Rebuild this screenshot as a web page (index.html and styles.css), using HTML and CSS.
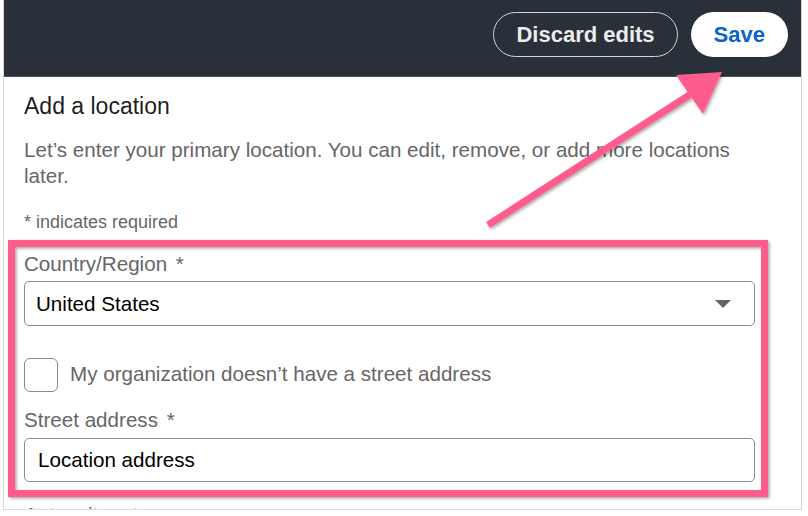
FILE: index.html
```html
<!DOCTYPE html>
<html lang="en">
<head>
<meta charset="utf-8">
<title>Add a location</title>
<link rel="stylesheet" href="styles.css">
</head>
<body>
<div class="window">
  <header class="topbar">
    <button class="btn btn-outline">Discard edits</button>
    <button class="btn btn-primary">Save</button>
  </header>
  <main class="content">
    <h2 class="title">Add a location</h2>
    <p class="desc">Let’s enter your primary location. You can edit, remove, or add more locations later.</p>
    <p class="req">* indicates required</p>
    <div class="field">
      <label class="label">Country/Region <span class="star">*</span></label>
      <div class="select">United States<span class="caret"></span></div>
    </div>
    <label class="check-row">
      <span class="checkbox"></span>
      <span class="check-text">My organization doesn’t have a street address</span>
    </label>
    <div class="field field-tight">
      <label class="label">Street address <span class="star">*</span></label>
      <div class="input">Location address</div>
    </div>
    <div class="field field-apt">
      <label class="label">Apt, suite, etc.</label>
    </div>
  </main>
</div>
<svg class="annot" width="808" height="516" viewBox="0 0 808 516">
  <defs>
    <filter id="sh" x="-10%" y="-10%" width="120%" height="120%">
      <feDropShadow dx="1.5" dy="1.5" stdDeviation="1.5" flood-color="#000" flood-opacity="0.35"/>
    </filter>
  </defs>
  <g filter="url(#sh)">
    <rect x="11.5" y="243.5" width="753" height="250" fill="none" stroke="#fd5c8d" stroke-width="7"/>
    <line x1="488" y1="225" x2="694" y2="92" stroke="#fd5c8d" stroke-width="7"/>
    <polygon points="722,72 676,75 703,114" fill="#fd5c8d"/>
  </g>
</svg>
</body>
</html>
```

FILE: styles.css
```css
* { box-sizing: border-box; }

html, body {
  margin: 0;
  padding: 0;
}

body {
  width: 808px;
  height: 516px;
  overflow: hidden;
  position: relative;
  background: #ffffff;
  font-family: "Liberation Sans", Arial, sans-serif;
}

.window {
  margin-left: 3px;
  width: 799px;
  height: 510px;
  border-left: 1px solid #d9d9d9;
  border-right: 1px solid #d2d2d2;
  border-bottom: 1px solid #dcdcdc;
  overflow: hidden;
  background: #fff;
}

.topbar {
  height: 77px;
  background: #2a3039;
  border-bottom: 1px solid #4b5058;
  display: flex;
  justify-content: flex-end;
  align-items: flex-start;
  gap: 13px;
  padding: 12px 13px 0 0;
}

.btn {
  height: 45px;
  border-radius: 23px;
  font-family: "Liberation Sans", Arial, sans-serif;
  font-size: 22px;
  font-weight: 700;
  line-height: 1;
  cursor: pointer;
}

.btn-outline {
  background: transparent;
  border: 1.5px solid #d4d4d4;
  color: #ececec;
  padding: 0 22px;
}

.btn-primary {
  background: #ffffff;
  border: none;
  color: #0a66c2;
  padding: 0 23px;
}

.content {
  padding: 15px 46px 0 20px;
}

.title {
  margin: 0;
  font-size: 23px;
  font-weight: 400;
  line-height: 28px;
  color: rgba(0, 0, 0, 0.9);
}

.desc {
  margin: 17px 0 0;
  font-size: 20.6px;
  line-height: 25.5px;
  color: #666666;
}

.req {
  margin: 22.5px 0 0;
  font-size: 18px;
  line-height: 22px;
  color: #666666;
}

.field {
  margin-top: 18.5px;
}

.field-tight {
  margin-top: 15px;
}

.field-apt {
  margin-top: 20px;
}

.label {
  display: block;
  font-size: 20.6px;
  line-height: 25px;
  color: #666666;
}

.star {
  margin-left: 3px;
}

.select,
.input {
  display: flex;
  align-items: center;
  border: 1px solid #8c8c8c;
  border-radius: 5px;
  font-size: 20.6px;
  color: #000000;
  background: #fff;
}

.select {
  margin-top: 5px;
  height: 45px;
  padding-left: 11px;
}

.caret {
  margin-left: auto;
  margin-right: 23px;
  width: 0;
  height: 0;
  border-left: 8px solid transparent;
  border-right: 8px solid transparent;
  border-top: 8px solid #666666;
}

.input {
  margin-top: 6px;
  height: 44px;
  padding-left: 13px;
}

.check-row {
  display: flex;
  align-items: flex-start;
  gap: 12px;
  margin-top: 32px;
  height: 34px;
}

.checkbox {
  width: 34px;
  height: 34px;
  border: 1.5px solid #8a8a8a;
  border-radius: 6px;
  flex: none;
}

.check-text {
  margin-top: 2.5px;
  font-size: 20.6px;
  line-height: 25px;
  color: #666666;
}

.annot {
  position: absolute;
  left: 0;
  top: 0;
  pointer-events: none;
}
```
